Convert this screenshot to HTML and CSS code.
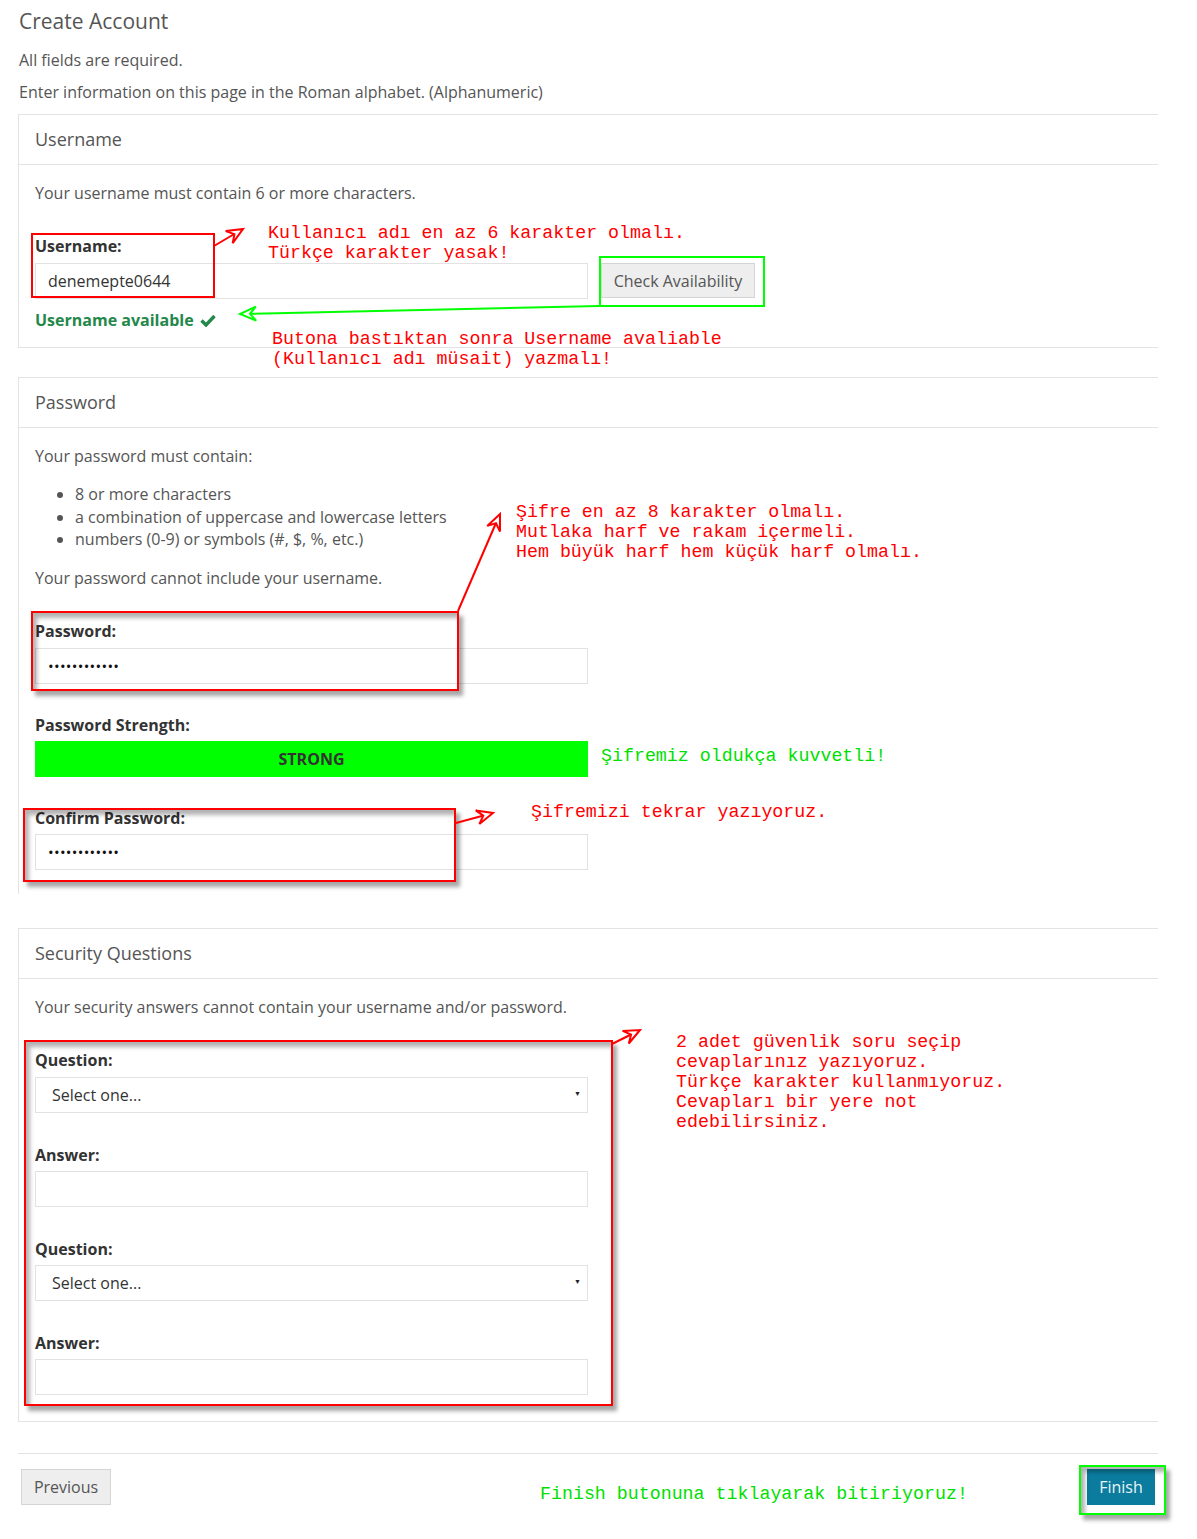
FILE: index.html
```html
<!DOCTYPE html>
<html lang="en">
<head>
  <meta charset="UTF-8" />
  <meta name="viewport" content="width=device-width, initial-scale=1.0"/>
  <title>Create Account</title>
  <link rel="stylesheet" href="styles.css">
</head>
<body>
<div class="page">

  <h1>Create Account</h1>
  <p class="intro">All fields are required.</p>
  <p class="intro second">Enter information on this page in the Roman alphabet. (Alphanumeric)</p>

  <!-- username -->
  <section class="panel panel-user">
    <div class="panel-heading">Username</div>
    <div class="panel-body">
      <p>Your username must contain 6 or more characters.</p>
      <div class="field">
        <label for="username">Username:</label>
        <div class="input-row">
          <input class="control" id="username" type="text" value="denemepte0644">
          <button class="btn btn-check">Check Availability</button>
        </div>
        <div class="status">Username available
          <svg width="16" height="13" viewBox="0 0 16 13"><path d="M1.5 6.5 L6 11 L14.5 2" fill="none" stroke="#23884a" stroke-width="3.4"/></svg>
        </div>
      </div>
    </div>
  </section>

  <!-- password -->
  <section class="panel panel-pass">
    <div class="panel-heading">Password</div>
    <div class="panel-body">
      <p>Your password must contain:</p>
      <ul class="rules">
        <li>8 or more characters</li>
        <li>a combination of uppercase and lowercase letters</li>
        <li>numbers (0-9) or symbols (#, $, %, etc.)</li>
      </ul>
      <p class="after-list">Your password cannot include your username.</p>
      <div class="field">
        <label for="password">Password:</label>
        <input class="control pass" id="password" type="password" value="Deneme123456">
      </div>
      <div class="field">
        <label>Password Strength:</label>
        <div class="strength">STRONG</div>
      </div>
      <div class="field">
        <label for="confirm">Confirm Password:</label>
        <input class="control pass" id="confirm" type="password" value="Deneme123456">
      </div>
    </div>
  </section>

  <!-- security questions -->
  <section class="panel panel-sec">
    <div class="panel-heading">Security Questions</div>
    <div class="panel-body">
      <p>Your security answers cannot contain your username and/or password.</p>
      <div class="field">
        <label for="q1">Question:</label>
        <div class="select-wrap">
          <select class="control" id="q1"><option>Select one...</option></select>
        </div>
      </div>
      <div class="field">
        <label for="a1">Answer:</label>
        <input class="control" id="a1" type="text">
      </div>
      <div class="field">
        <label for="q2">Question:</label>
        <div class="select-wrap">
          <select class="control" id="q2"><option>Select one...</option></select>
        </div>
      </div>
      <div class="field">
        <label for="a2">Answer:</label>
        <input class="control" id="a2" type="text">
      </div>
    </div>
  </section>

  <div class="footer">
    <button class="btn btn-prev">Previous</button>
    <button class="btn btn-finish">Finish</button>
  </div>

  <!-- notes drawn over the form -->
  <div class="box red box-user"></div>
  <div class="box red shadow box-pass"></div>
  <div class="box red shadow box-confirm"></div>
  <div class="box red shadow box-sec"></div>
  <div class="box green box-check"></div>
  <div class="box green shadow box-finish"></div>

  <svg class="arrows" width="1197" height="1539" viewBox="0 0 1197 1539">
    <g fill="#fff" stroke="#f00" stroke-width="2">
      <line x1="214" y1="246" x2="241" y2="230"/>
      <path d="M232.7 243.1 L243 229 L225.7 231.1 L234.4 234.1 Z"/>
      <line x1="458" y1="611" x2="499" y2="516"/>
      <path d="M500 531.5 L500 514 L487.2 525.9 L496 523.2 Z"/>
      <line x1="456" y1="823" x2="491" y2="813.5"/>
      <path d="M479.4 824 L493 813 L475.7 810.4 L483.3 815.6 Z"/>
      <line x1="612" y1="1044" x2="638" y2="1031"/>
      <path d="M628.8 1043.5 L640 1030 L622.6 1030.9 L631.1 1034.5 Z"/>
    </g>
    <g fill="#fff" stroke="#0f0" stroke-width="2">
      <line x1="599" y1="306" x2="242" y2="314"/>
      <path d="M255.8 306.6 L240 314 L256.2 320.6 L250 313.8 Z"/>
    </g>
  </svg>

  <div class="tip red tip-user">Kullanıcı adı en az 6 karakter olmalı.<br>Türkçe karakter yasak!</div>
  <div class="tip red tip-avail">Butona bastıktan sonra Username avaliable<br>(Kullanıcı adı müsait) yazmalı!</div>
  <div class="tip red tip-pass">Şifre en az 8 karakter olmalı.<br>Mutlaka harf ve rakam içermeli.<br>Hem büyük harf hem küçük harf olmalı.</div>
  <div class="tip green tip-strong">Şifremiz oldukça kuvvetli!</div>
  <div class="tip red tip-confirm">Şifremizi tekrar yazıyoruz.</div>
  <div class="tip red tip-sec">2 adet güvenlik soru seçip<br>cevaplarınız yazıyoruz.<br>Türkçe karakter kullanmıyoruz.<br>Cevapları bir yere not<br>edebilirsiniz.</div>
  <div class="tip green tip-finish">Finish butonuna tıklayarak bitiriyoruz!</div>

</div>
</body>
</html>
```

FILE: styles.css
```css
* {
  box-sizing: border-box;
}

body {
  margin: 0;
  font-family: 'Open Sans', sans-serif;
  font-size: 16px;
  color: #555;
  background-color: #fff;
}

.page {
  position: relative;
  width: 1197px;
  min-height: 1539px;
}

h1 {
  margin: 0;
  padding: 7px 0 0 19px;
  font-size: 21px;
  font-weight: 400;
  line-height: 28px;
  color: #555;
}

.intro {
  margin: 14px 0 0 19px;
  line-height: 22px;
}

.intro.second {
  margin-top: 10px;
}

/* panels */
.panel {
  width: 1140px;
  margin: 11px 0 0 18px;
  border: 1px solid #e3e3e3;
  border-right: none;
}

.panel-pass {
  margin-top: 29px;
  border-bottom: none;
}

.panel-sec {
  margin-top: 34px;
}

.panel-heading {
  padding: 12px 16px 13px;
  font-size: 18px;
  line-height: 24px;
  color: #555;
  border-bottom: 1px solid #e3e3e3;
}

.panel-body {
  padding: 17px 16px 24px;
}

.panel-user .panel-body {
  padding-bottom: 16px;
}

.panel-sec .panel-body {
  padding-bottom: 26px;
}

.panel-body p {
  margin: 0;
  line-height: 22px;
}

.rules {
  margin: 16px 0 0;
  padding-left: 40px;
}

.rules li {
  line-height: 22.5px;
}

.panel-body .after-list {
  margin-top: 16px;
}

.field {
  margin-top: 31px;
}

.panel-pass .field + .field {
  margin-top: 30px;
}

.panel-pass .field + .field label,
.panel-sec .field + .field label {
  margin-bottom: 5px;
}

.field label {
  display: block;
  font-weight: 700;
  line-height: 22px;
  margin-bottom: 6px;
  color: #333;
}

.control {
  display: block;
  width: 553px;
  height: 36px;
  padding: 0 12px;
  border: 1px solid #e2e2e2;
  border-radius: 0;
  background: #fff;
  font-family: 'Open Sans', sans-serif;
  font-size: 16px;
  color: #333;
  outline: none;
}

.control.pass {
  font-size: 15px;
  color: #111;
  letter-spacing: 0.3px;
}

.input-row {
  display: flex;
  align-items: flex-start;
  gap: 13px;
}

.btn {
  font-family: 'Open Sans', sans-serif;
  font-size: 16px;
  cursor: pointer;
}

.btn-check {
  width: 154px;
  height: 35px;
  background: #eee;
  border: 1px solid #d4d4d4;
  color: #555;
}

.status {
  margin-top: 10px;
  line-height: 22px;
  font-weight: 700;
  color: #23884a;
}

.status svg {
  margin-left: 2px;
  vertical-align: -1px;
}

.strength {
  width: 553px;
  height: 36px;
  line-height: 36px;
  text-align: center;
  background: #00ff00;
  font-size: 16px;
  font-weight: 700;
  color: #333;
}

.select-wrap {
  position: relative;
  width: 553px;
}

.select-wrap select {
  appearance: none;
  -webkit-appearance: none;
  padding-left: 16px;
}

.select-wrap::after {
  content: "\25BC";
  position: absolute;
  right: 7px;
  top: 12px;
  font-size: 7px;
  color: #222;
}

/* footer */
.footer {
  width: 1140px;
  margin: 31px 0 0 18px;
  padding: 15px 3px 0;
  border-top: 1px solid #e3e3e3;
  display: flex;
  justify-content: space-between;
}

.btn-prev {
  width: 90px;
  height: 36px;
  background: #eee;
  border: 1px solid #d5d5d5;
  color: #555;
}

.btn-finish {
  width: 68px;
  height: 36px;
  background: #0b7c9e;
  border: none;
  color: #e8f4f8;
}

/* notes over the form */
.box {
  position: absolute;
  border: 2px solid;
}

.box.red {
  border-color: #f00;
}

.box.green {
  border-color: #0f0;
}

.box.shadow {
  box-shadow: 4px 5px 4px rgba(0,0,0,0.35), inset 4px 5px 4px rgba(0,0,0,0.3);
}

.box-user { left: 31px; top: 233px; width: 184px; height: 65px; }
.box-pass { left: 31px; top: 611px; width: 428px; height: 80px; }
.box-confirm { left: 23px; top: 808px; width: 433px; height: 74px; }
.box-sec { left: 24px; top: 1040px; width: 589px; height: 366px; }
.box-check { left: 599px; top: 256px; width: 166px; height: 51px; }
.box-finish { left: 1079px; top: 1465px; width: 87px; height: 50px; }

.arrows {
  position: absolute;
  left: 0;
  top: 0;
  pointer-events: none;
}

.tip {
  position: absolute;
  font-family: 'Liberation Mono', monospace;
  font-size: 18.3px;
  line-height: 20px;
  white-space: nowrap;
}

.tip.red {
  color: #f00;
}

.tip.green {
  color: #00e000;
}

.tip-user { left: 268px; top: 223px; }
.tip-avail { left: 272px; top: 329px; }
.tip-pass { left: 516px; top: 502px; }
.tip-strong { left: 601px; top: 746px; }
.tip-confirm { left: 531px; top: 802px; }
.tip-sec { left: 676px; top: 1032px; }
.tip-finish { left: 540px; top: 1484px; }
```
